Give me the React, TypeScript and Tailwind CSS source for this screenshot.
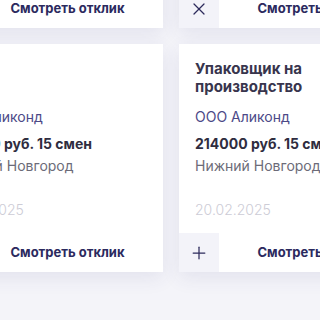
import { Plus, X } from 'lucide-react';

interface Vacancy {
  title: string[];
  company: string;
  salary: string;
  city: string;
  date: string;
  icon: 'plus' | 'x';
}

const rows: Vacancy[][] = [
  [
    { title: ['Повар'], company: 'ООО Аликонд', salary: '214000 руб. 15 смен', city: 'Нижний Новгород', date: '20.02.2025', icon: 'plus' },
    { title: ['Упаковщик на', 'производство'], company: 'ООО Аликонд', salary: '214000 руб. 15 смен', city: 'Нижний Новгород', date: '20.02.2025', icon: 'x' },
  ],
  [
    { title: ['Повар'], company: 'ООО Аликонд', salary: '214000 руб. 15 смен', city: 'Нижний Новгород', date: '20.02.2025', icon: 'plus' },
    { title: ['Упаковщик на', 'производство'], company: 'ООО Аликонд', salary: '214000 руб. 15 смен', city: 'Нижний Новгород', date: '20.02.2025', icon: 'plus' },
  ],
];

function VacancyCard({ v }: { v: Vacancy }) {
  return (
    <div className="h-[228px] bg-white flex flex-col shadow-[0_6px_18px_rgba(60,60,120,0.09)]">
      <div className="px-4 pt-[16px] flex-1">
        <div className="h-[36px] text-[15px] leading-[18px] font-bold text-[#38354d]">
          {v.title.map((line) => (
            <div key={line}>{line}</div>
          ))}
        </div>
        <div className="mt-[12px] text-[14px] leading-[18px] text-[#4c4987]">{v.company}</div>
        <div className="mt-[9px] text-[14px] leading-[18px] font-bold text-[#2f2d3f] whitespace-nowrap">{v.salary}</div>
        <div className="mt-[4px] text-[14px] leading-[18px] text-[#6c6b78] whitespace-nowrap">{v.city}</div>
        <div className="mt-[26px] text-[14px] leading-[18px] font-light text-[#cdccd6]">{v.date}</div>
      </div>
      <div className="h-[39px] flex items-center">
        <button className="w-[40px] h-[39px] bg-[#f3f3f9] flex items-center justify-center text-[#2d2b5c]">
          {v.icon === 'x' ? <X size={20} strokeWidth={1.5} /> : <Plus size={20} strokeWidth={1.5} />}
        </button>
        <span className="flex-1 text-center text-[13px] font-bold text-[#2b2a5e] whitespace-nowrap">Смотреть отклик</span>
      </div>
    </div>
  );
}

export default function App() {
  return (
    <div
      className="w-[320px] h-[320px] overflow-hidden bg-[#f4f4f9]"
      style={{ fontFamily: 'Inter, "Noto Sans", sans-serif' }}
    >
      <div className="ml-[-68px] mt-[-200px] flex flex-col gap-4">
        {rows.map((row, i) => (
          <div key={i} className="grid grid-cols-[231px_231px] gap-4 w-[478px]">
            {row.map((v, j) => (
              <VacancyCard key={j} v={v} />
            ))}
          </div>
        ))}
      </div>
    </div>
  );
}
